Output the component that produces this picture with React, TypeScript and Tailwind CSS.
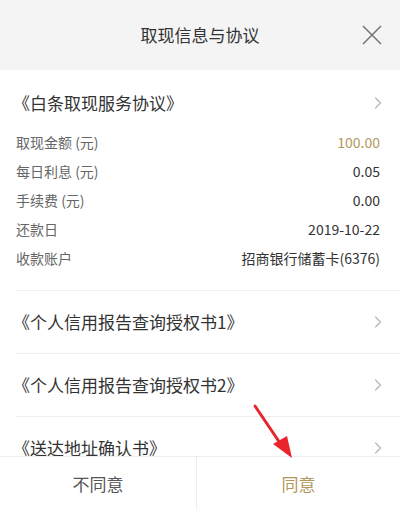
import { ChevronRight } from "lucide-react";

const FONT = {
  fontFamily: '"Noto Sans CJK SC", "Noto Sans", Roboto, sans-serif',
};

const details = [
  { label: "取现金额 (元)", value: "100.00", gold: true },
  { label: "每日利息 (元)", value: "0.05" },
  { label: "手续费 (元)", value: "0.00" },
  { label: "还款日", value: "2019-10-22" },
  { label: "收款账户", value: "招商银行储蓄卡(6376)" },
];

function Chevron() {
  return <ChevronRight className="h-5 w-5 text-[#b5b5b5]" strokeWidth={1.4} />;
}

function DocRow({ title }: { title: string }) {
  return (
    <div className="flex h-[63px] items-center justify-between border-t border-[#eeeeee] pr-3">
      <span className="-ml-[3px] text-[17px] text-[#333333]">{title}</span>
      <Chevron />
    </div>
  );
}

export default function App() {
  return (
    <div
      className="relative flex h-[510px] w-[400px] flex-col overflow-hidden bg-white"
      style={FONT}
    >
      {/* 标题栏 */}
      <div className="relative flex h-[70px] shrink-0 items-center justify-center bg-[#f4f4f4]">
        <span className="text-[17px] text-[#333333]">取现信息与协议</span>
        <svg
          className="absolute right-[17px] top-[24px] h-[22px] w-[22px]"
          viewBox="0 0 22 22"
          fill="none"
          stroke="#777777"
          strokeWidth="1.6"
        >
          <path d="M2 2 L20 20 M20 2 L2 20" />
        </svg>
      </div>

      {/* 内容 */}
      <div className="flex-1 overflow-hidden pl-4">
        <div className="flex h-[22px] mt-[22px] items-center justify-between pr-3">
          <span className="-ml-[3px] text-[17px] leading-[22px] text-[#333333]">
            《白条取现服务协议》
          </span>
          <Chevron />
        </div>

        <div className="mt-[14px] flex flex-col pr-5 pb-[17px]">
          {details.map((d) => (
            <div
              key={d.label}
              className="flex h-[29px] items-center justify-between text-[14px]"
            >
              <span className="text-[#666666]">{d.label}</span>
              <span className={d.gold ? "text-[#b5975e]" : "text-[#333333]"}>
                {d.value}
              </span>
            </div>
          ))}
        </div>

        <DocRow title="《个人信用报告查询授权书1》" />
        <DocRow title="《个人信用报告查询授权书2》" />
        <DocRow title="《送达地址确认书》" />
      </div>

      {/* 底部按钮 */}
      <div className="absolute bottom-0 left-0 right-0 flex h-[54px] border-t border-[#eeeeee] bg-white">
        <button className="flex w-[197px] items-center justify-center border-r border-[#eeeeee] text-[17px] text-[#555555]">
          不同意
        </button>
        <button className="flex flex-1 items-center justify-center text-[17px] text-[#b5975e]">
          同意
        </button>
      </div>

      {/* 标注箭头 */}
      <svg
        className="pointer-events-none absolute left-0 top-0 h-[510px] w-[400px]"
        viewBox="0 0 400 510"
      >
        <path
          d="M255 406 L282 446"
          stroke="#e8242c"
          strokeWidth="3"
          strokeLinecap="round"
        />
        <path d="M292 458 L273 444 L287 436 Z" fill="#e8242c" />
      </svg>
    </div>
  );
}
